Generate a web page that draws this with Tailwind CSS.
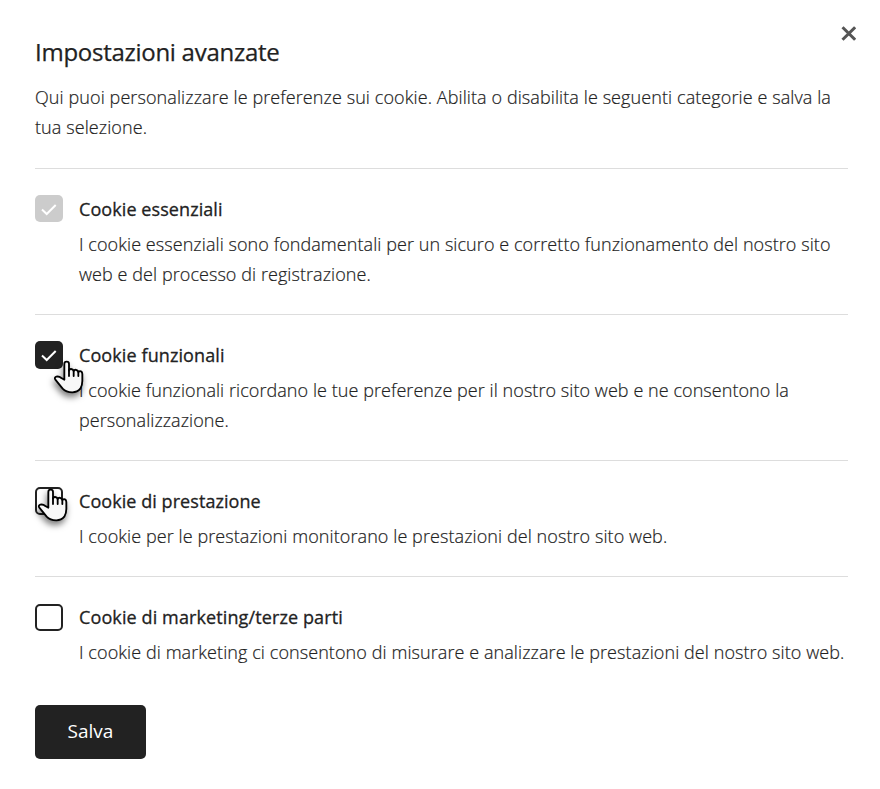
<!DOCTYPE html>
<html lang="it">
<head>
  <meta charset="UTF-8" />
  <meta name="viewport" content="width=device-width, initial-scale=1" />
  <title>Impostazioni avanzate</title>
  <script src="https://cdn.jsdelivr.net/npm/@tailwindcss/browser@4"></script>
</head>
<body class="min-h-screen bg-white font-['Open_Sans',sans-serif] text-[#222]">
  <main class="relative pt-[37px] pl-[35px] pr-8">
    <button class="absolute top-[26px] right-6 size-[15px]" aria-label="Chiudi">
      <svg viewBox="0 0 15 15" class="size-[15px]" fill="none" stroke="#555" stroke-width="3"><path d="M1.5 1.2l12.6 12.6M14.1 1.2L1.5 13.8" /></svg>
    </button>

    <header class="h-[132px] border-b border-[#ddd]">
      <h1 class="text-2xl leading-[30px] font-medium tracking-[-0.27px] [-webkit-text-stroke:0.25px_#222]">Impostazioni avanzate</h1>
      <p class="mt-[15px] text-lg leading-[30px] font-light tracking-[0.09px] whitespace-nowrap [-webkit-text-stroke:0.2px_#222]">Qui puoi personalizzare le preferenze sui cookie. Abilita o disabilita le seguenti categorie e salva la<br />tua selezione.</p>
    </header>

    <section class="flex h-[146px] gap-4 border-b border-[#ddd] pt-[26px]">
      <span class="h-[27px] w-7 shrink-0 rounded-[5px] bg-[#ccc]">
        <svg viewBox="0 0 28 28" class="size-7" fill="none" stroke="#fff" stroke-width="2"><path d="M7 14.5l4.7 4.5L20.7 10" /></svg>
      </span>
      <div class="-mt-px whitespace-nowrap">
        <h2 class="text-lg leading-[30px] font-medium tracking-[0.08px] [-webkit-text-stroke:0.3px_#222]">Cookie essenziali</h2>
        <p class="mt-[5px] text-lg leading-[30px] font-light tracking-[0.07px] [-webkit-text-stroke:0.2px_#222]">I cookie essenziali sono fondamentali per un sicuro e corretto funzionamento del nostro sito<br />web e del processo di registrazione.</p>
      </div>
    </section>

    <section class="relative flex h-[146px] gap-4 border-b border-[#ddd] pt-[26px]">
      <span class="size-7 shrink-0 rounded-[5px] bg-[#222]">
        <svg viewBox="0 0 28 28" class="size-7" fill="none" stroke="#fff" stroke-width="2"><path d="M7 14.5l4.7 4.5L20.7 10" /></svg>
      </span>
      <div class="-mt-px whitespace-nowrap">
        <h2 class="text-lg leading-[30px] font-medium tracking-[0.1px] [-webkit-text-stroke:0.3px_#222]">Cookie funzionali</h2>
        <p class="mt-[5px] text-lg leading-[30px] font-light tracking-[0.06px] [-webkit-text-stroke:0.2px_#222]">I cookie funzionali ricordano le tue preferenze per il nostro sito web e ne consentono la<br />personalizzazione.</p>
      </div>
      <!-- puntatore -->
      <svg viewBox="84 90 96 102" class="absolute top-[45px] left-[18px] h-[34px] w-8 overflow-visible drop-shadow-[-1px_4px_3px_rgba(0,0,0,0.5)]" fill="#f8f8f8" stroke="#000" stroke-width="5.5" stroke-linecap="round" stroke-linejoin="round">
        <path d="M118 149V102Q118 95 125 95Q132 95 132 102V122Q134 116 139 117Q145 118 146 123Q149 118 154 120Q159 121 160 126Q164 122 168 124Q172 126 172 132V153Q172 166 166 176Q157 187 142 187Q123 187 113 176L91 149Q87 142 94 140Q102 138 109 144Z" />
        <path d="M132 120V138M146 122V138M160 126V138" fill="none" />
      </svg>
    </section>

    <section class="relative flex h-[116px] gap-4 border-b border-[#ddd] pt-[26px]">
      <span class="size-7 shrink-0 rounded-[5px] border-2 border-[#222]"></span>
      <div class="-mt-px whitespace-nowrap">
        <h2 class="text-lg leading-[30px] font-medium tracking-[0.06px] [-webkit-text-stroke:0.3px_#222]">Cookie di prestazione</h2>
        <p class="mt-[5px] text-lg leading-[30px] font-light tracking-[0.08px] [-webkit-text-stroke:0.2px_#222]">I cookie per le prestazioni monitorano le prestazioni del nostro sito web.</p>
      </div>
      <!-- puntatore -->
      <svg viewBox="84 90 96 102" class="absolute top-[27px] left-[2px] h-[34px] w-8 overflow-visible drop-shadow-[-1px_4px_3px_rgba(0,0,0,0.5)]" fill="#f8f8f8" stroke="#000" stroke-width="5.5" stroke-linecap="round" stroke-linejoin="round">
        <path d="M118 149V102Q118 95 125 95Q132 95 132 102V122Q134 116 139 117Q145 118 146 123Q149 118 154 120Q159 121 160 126Q164 122 168 124Q172 126 172 132V153Q172 166 166 176Q157 187 142 187Q123 187 113 176L91 149Q87 142 94 140Q102 138 109 144Z" />
        <path d="M132 120V138M146 122V138M160 126V138" fill="none" />
      </svg>
    </section>

    <section class="flex h-32 gap-4 pt-[27px]">
      <span class="h-[27px] w-7 shrink-0 rounded-[5px] border-2 border-[#222]"></span>
      <div class="-mt-0.5 whitespace-nowrap">
        <h2 class="text-lg leading-[30px] font-medium tracking-[0.11px] [-webkit-text-stroke:0.3px_#222]">Cookie di marketing/terze parti</h2>
        <p class="mt-[5px] text-lg leading-[30px] font-light tracking-[0.08px] [-webkit-text-stroke:0.2px_#222]">I cookie di marketing ci consentono di misurare e analizzare le prestazioni del nostro sito web.</p>
      </div>
    </section>

    <button class="block h-[54px] w-[111px] rounded-[5px] bg-[#222] pb-0.5 text-[19px] text-white">Salva</button>
  </main>
</body>
</html>
